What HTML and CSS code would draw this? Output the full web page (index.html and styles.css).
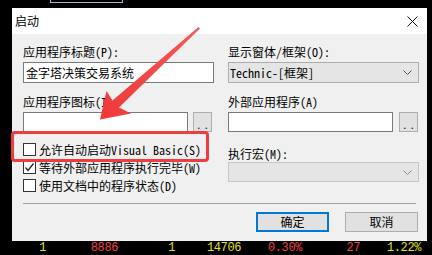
FILE: index.html
```html
<!DOCTYPE html>
<html>
<head>
<meta charset="utf-8">
<link rel="stylesheet" href="styles.css">
</head>
<body>
<div class="screen">
  <div class="topstrip"><div class="bracket"></div></div>
  <div class="dialog">
    <div class="titlebar">
      <span class="title">启动</span>
      <svg class="close" width="11" height="11" viewBox="0 0 11 11"><path d="M0.5 0.5 L10.5 10.5 M10.5 0.5 L0.5 10.5" stroke="#111" stroke-width="1" fill="none"/></svg>
    </div>
    <div class="content">
      <div class="cols">
        <div class="col">
          <div class="label">应用程序标题(P):</div>
          <div class="input first">金字塔决策交易系统</div>
          <div class="label spaced">应用程序图标(I):</div>
          <div class="inrow">
            <div class="input"></div>
            <div class="dots">..</div>
          </div>
          <div class="checks">
            <div class="check"><span class="box"></span><span>允许自动启动Visual Basic(S)</span></div>
            <div class="check"><span class="box">
              <svg width="11" height="11" viewBox="0 0 11 11"><path d="M1.5 5.5 L4 8.5 L9.5 1.5" stroke="#222" stroke-width="1.3" fill="none"/></svg>
            </span><span>等待外部应用程序执行完毕(W)</span></div>
            <div class="check"><span class="box"></span><span>使用文档中的程序状态(D)</span></div>
          </div>
        </div>
        <div class="col">
          <div class="label">显示窗体/框架(O):</div>
          <div class="select first"><span>Technic-[框架]</span>
            <svg width="9" height="5" viewBox="0 0 9 5"><path d="M0.5 0.5 L4.5 4.5 L8.5 0.5" stroke="#555" fill="none"/></svg>
          </div>
          <div class="label spaced">外部应用程序(A)</div>
          <div class="inrow">
            <div class="input"></div>
            <div class="dots">..</div>
          </div>
          <div class="label macro">执行宏(M):</div>
          <div class="select disabled"><span></span>
            <svg width="9" height="5" viewBox="0 0 9 5"><path d="M0.5 0.5 L4.5 4.5 L8.5 0.5" stroke="#888" fill="none"/></svg>
          </div>
        </div>
      </div>
      <div class="sep"></div>
      <div class="buttons">
        <div class="btn default">确定</div>
        <div class="btn">取消</div>
      </div>
    </div>
    <div class="highlight"></div>
  </div>
  <div class="ticker">
    <span class="y">1</span>
    <span class="r">8886</span>
    <span class="y">1</span>
    <span class="y">14706</span>
    <span class="r">0.30%</span>
    <span class="r">27</span>
    <span class="y">1.22%</span>
  </div>
  <svg class="arrow" width="432" height="255" viewBox="0 0 432 255">
    <defs>
      <linearGradient id="ag" x1="199" y1="28" x2="100" y2="119" gradientUnits="userSpaceOnUse">
        <stop offset="0" stop-color="#f25a5a"/>
        <stop offset="1" stop-color="#ef3838"/>
      </linearGradient>
    </defs>
    <polygon fill="url(#ag)" points="198.5,27 200,28.6 119,107.5 131,113.5 100,119.5 106.5,91 112.5,100.5"/>
  </svg>
</div>
</body>
</html>
```

FILE: styles.css
```css
* { box-sizing: border-box; }
html, body { margin: 0; padding: 0; background: #000; }
body { width: 432px; height: 255px; overflow: hidden; }
.screen {
  position: relative;
  width: 432px;
  height: 255px;
  font-family: "Noto Sans Mono CJK SC", "Noto Sans CJK SC", monospace;
  font-size: 12px;
  color: #000;
}
.topstrip { height: 8px; padding-left: 50px; }
.bracket {
  width: 73px;
  height: 3px;
  border: 1px solid #9ab8da;
  border-top: none;
}
.dialog {
  position: relative;
  margin-left: 12px;
  width: 415px;
  height: 233px;
  background: #f0f0f0;
}
.titlebar {
  height: 26px;
  background: #fff;
  display: flex;
  align-items: center;
  justify-content: space-between;
  padding: 0 9px 0 3px;
}
.title {
  font-family: "Noto Sans CJK SC", sans-serif;
  font-size: 12px;
  line-height: 14px;
  margin-top: -1px;
}
.close { display: block; margin-top: 1px; }
.content { padding: 11px 8px 0 11px; }
.cols {
  display: grid;
  grid-template-columns: 191px 191px;
  column-gap: 14px;
}
.col { display: flex; flex-direction: column; }
.label { line-height: 14px; height: 14px; white-space: nowrap; }
.label.spaced { margin-top: 12px; }
.label.macro { margin-top: 15px; }
.input {
  height: 20px;
  margin-top: 3px;
  background: #fff;
  border: 1px solid #7a7a7a;
  padding: 0 2px;
  line-height: 18px;
  white-space: nowrap;
}
.input.first { height: 21px; line-height: 19px; }
.inrow { display: flex; align-items: flex-start; margin-top: 3px; }
.inrow .input { margin-top: 0; width: 165px; flex: none; }
.dots {
  margin-left: 5px;
  width: 19px;
  height: 20px;
  background: #e1e1e1;
  border: 1px solid #adadad;
  text-align: center;
  line-height: 22px;
  font-size: 11px;
  letter-spacing: 2px;
  padding-left: 2px;
  color: #222;
}
.col:last-child .dots { margin-left: 6px; }
.select {
  height: 20px;
  margin-top: 3px;
  background: #e5e5e5;
  border: 1px solid #adadad;
  display: flex;
  align-items: center;
  justify-content: space-between;
  padding: 0 6px 0 1px;
  white-space: nowrap;
}
.select.first { height: 21px; }
.select.disabled { margin-top: 1px; border-color: #c6c6c6; background: #e5e5e5; }
.select svg { display: block; }
.checks { display: flex; flex-direction: column; margin-top: 8px; }
.check {
  height: 18px;
  display: flex;
  align-items: center;
  white-space: nowrap;
}
.box {
  width: 13px;
  height: 13px;
  border: 1px solid #333;
  background: #fff;
  margin-right: 3px;
  display: flex;
  align-items: center;
  justify-content: center;
  flex: none;
}
.box svg { display: block; }
.sep {
  margin-top: 9px;
  margin-right: 3px;
  height: 1px;
  background: #a0a0a0;
}
.buttons {
  display: flex;
  justify-content: flex-end;
  gap: 16px;
  margin-top: 8px;
  padding-right: 1px;
}
.btn {
  width: 73px;
  height: 20px;
  background: #e1e1e1;
  border: 1px solid #adadad;
  text-align: center;
  line-height: 18px;
}
.btn.default { border: 2px solid #0078d7; line-height: 16px; }
.highlight {
  position: absolute;
  left: -1px;
  top: 123px;
  width: 198px;
  height: 31px;
  border: 3px solid #f03c3c;
  border-radius: 4px;
}
.ticker {
  display: grid;
  grid-template-columns: 46px 72px 57px 66px 61px 58px 61px;
  font-family: "Liberation Mono", monospace;
  font-size: 12px;
  letter-spacing: -0.4px;
  line-height: 14px;
  height: 14px;
  text-align: right;
}
.y { color: #e2e21c; }
.r { color: #f04444; }
.arrow { position: absolute; left: 0; top: 0; pointer-events: none; }
```
